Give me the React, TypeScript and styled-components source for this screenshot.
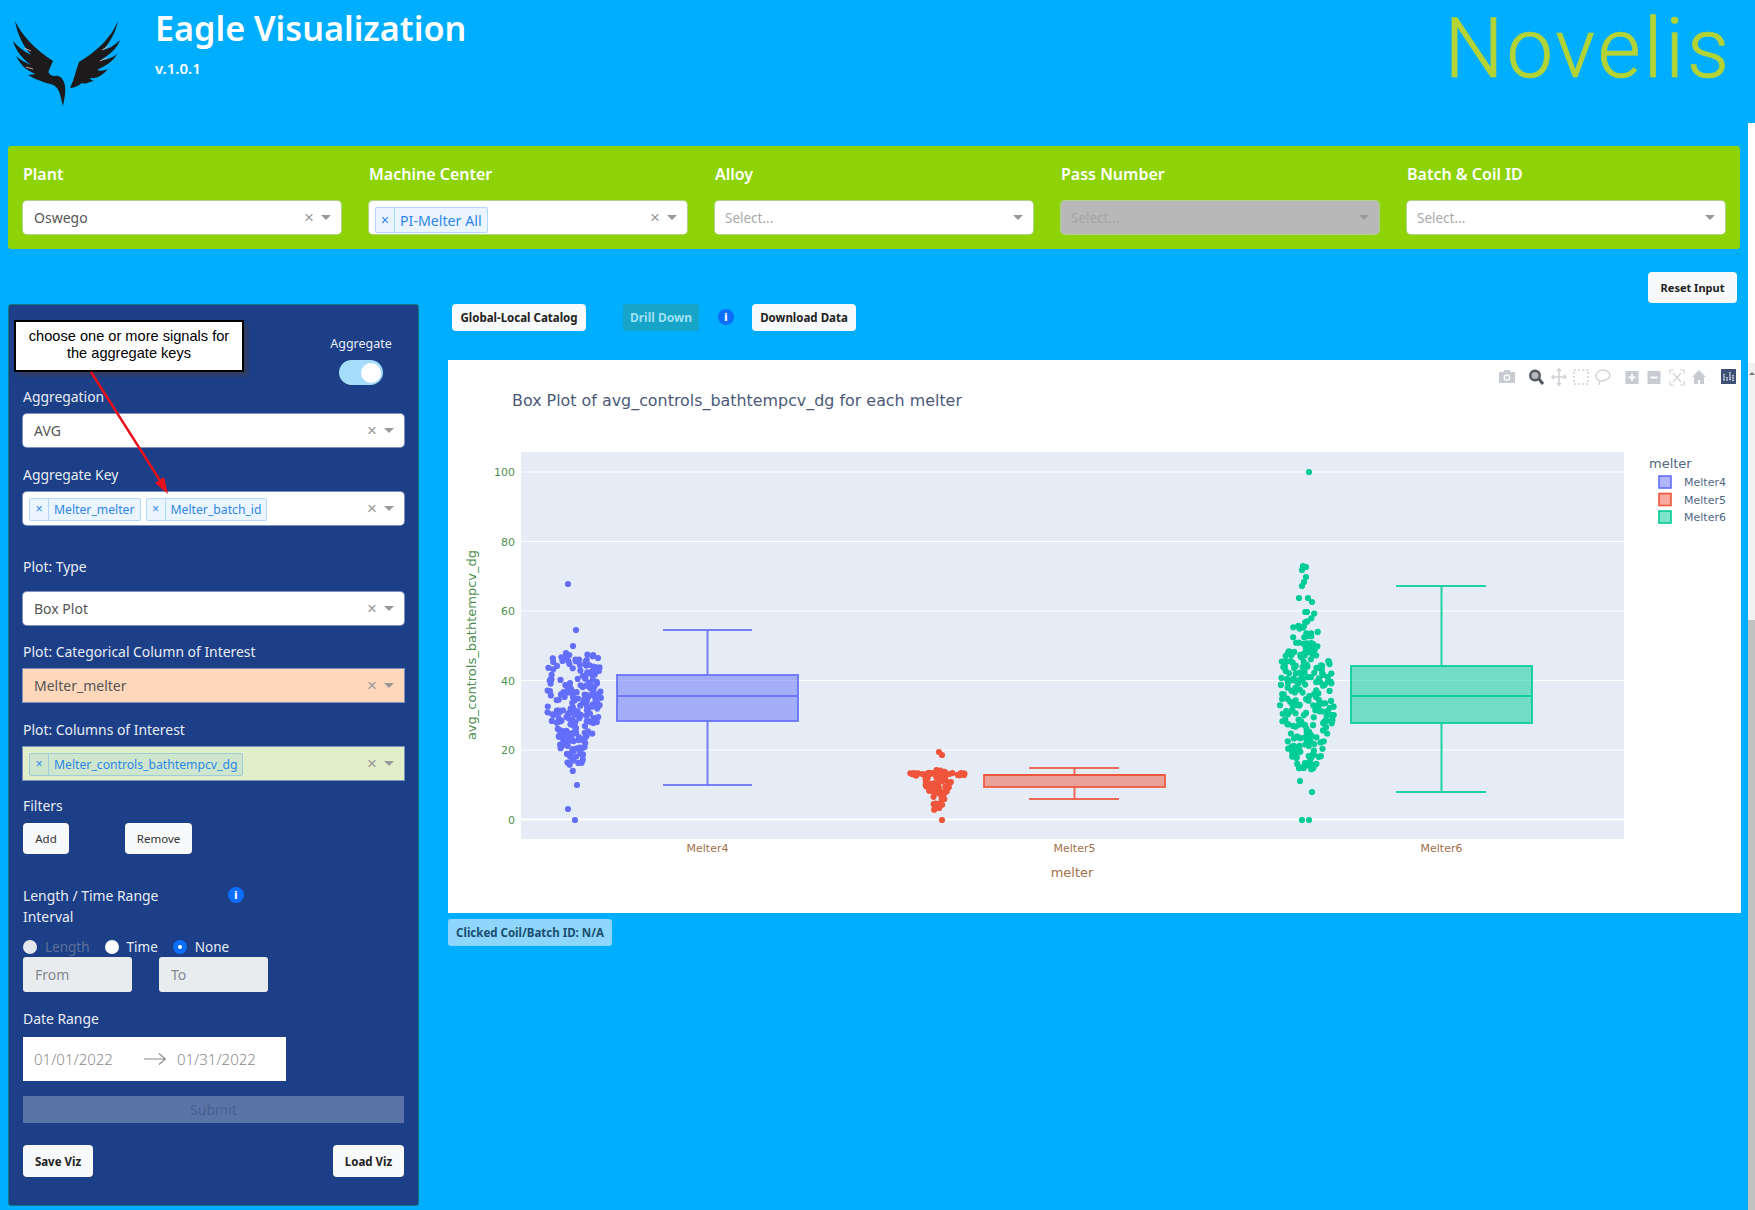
import React from 'react';
import styled, { createGlobalStyle } from 'styled-components';

const UI_FONT = '"Noto Sans", "Open Sans", sans-serif';
const PLOT_FONT = '"DejaVu Sans", sans-serif';

const GlobalStyle = createGlobalStyle`
  html, body {
    margin: 0;
    padding: 0;
    background: #00aeff;
    overflow: hidden;
  }
  * {
    box-sizing: border-box;
  }
`;

function seeded(seed: number) {
  let s = seed;
  return () => {
    s = (s * 16807) % 2147483647;
    return (s - 1) / 2147483646;
  };
}

type Pt = [number, number];

// jittered swarm, width follows a profile of [y, halfWidth] stops
function swarm(seed: number, cx: number, n: number, profile: Pt[]): Pt[] {
  const rnd = seeded(seed);
  const out: Pt[] = [];
  const top = profile[0][0];
  const bottom = profile[profile.length - 1][0];
  const widthAt = (y: number) => {
    for (let i = 1; i < profile.length; i++) {
      if (y <= profile[i][0]) {
        const [y0, w0] = profile[i - 1];
        const [y1, w1] = profile[i];
        return w0 + ((y - y0) / (y1 - y0)) * (w1 - w0);
      }
    }
    return 0;
  };
  let guard = 0;
  while (out.length < n && guard < 20000) {
    guard++;
    const y = top + rnd() * (bottom - top);
    const w = widthAt(y);
    if (rnd() * 30 > w) continue;
    out.push([cx + (rnd() * 2 - 1) * w, y]);
  }
  return out;
}

const melter4Points: Pt[] = [
  ...swarm(11, 574, 215, [
    [653, 8],
    [656, 25],
    [672, 27],
    [700, 27],
    [712, 27],
    [730, 20],
    [750, 13],
    [770, 8],
    [775, 5],
  ]),
  [568, 584],
  [576, 630],
  [573, 646],
  [577, 785],
  [568, 809],
  [575, 820],
  [598, 658],
];

const melter5Points: Pt[] = [
  ...swarm(23, 938, 60, [
    [770, 6],
    [775, 14],
    [790, 12],
    [800, 7],
  ]),
  ...swarm(29, 938, 30, [
    [773, 28],
    [776, 28],
  ]),
  ...swarm(37, 937, 8, [
    [803, 6],
    [810, 4],
  ]),
  [939, 752],
  [942, 755],
  [942, 820],
];

const melter6Points: Pt[] = [
  ...swarm(41, 1306, 215, [
    [640, 10],
    [660, 24],
    [680, 27],
    [715, 28],
    [740, 22],
    [760, 14],
    [770, 8],
  ]),
  ...swarm(47, 1305, 18, [
    [612, 10],
    [640, 14],
  ]),
  [1303, 566],
  [1306, 567],
  [1302, 570],
  [1306, 577],
  [1304, 582],
  [1302, 586],
  [1299, 598],
  [1308, 598],
  [1312, 602],
  [1307, 612],
  [1300, 781],
  [1312, 792],
  [1302, 820],
  [1309, 820],
  [1309, 472],
];

const plotTraces = [
  {
    name: 'Melter4',
    color: '#636efa',
    fill: 'rgba(99,110,250,0.5)',
    points: melter4Points,
    box: { x0: 617, x1: 798, capL: 663, capR: 752, hi: 630, q3: 675, med: 696, q1: 721, lo: 785 },
  },
  {
    name: 'Melter5',
    color: '#ef553b',
    fill: 'rgba(239,85,59,0.5)',
    points: melter5Points,
    box: { x0: 984, x1: 1165, capL: 1029, capR: 1119, hi: 768, q3: 775, med: 775, q1: 787, lo: 799 },
  },
  {
    name: 'Melter6',
    color: '#00cc96',
    fill: 'rgba(0,204,150,0.5)',
    points: melter6Points,
    box: { x0: 1351, x1: 1532, capL: 1396, capR: 1486, hi: 586, q3: 666, med: 696, q1: 723, lo: 792 },
  },
];

const yTicks = [0, 20, 40, 60, 80, 100];
const tickY = (v: number) => 819.5 - 3.475 * v;

// plot svg coordinates are page coordinates shifted by the plot card origin
const OX = 448;
const OY = 360;

function EagleLogo() {
  return (
    <LogoSvg viewBox="0 0 140 115">
      <g fill="#1d1a1c">
        <path d="M15 21 C22 36 36 50 53 61 L49 70 C47 74 52 76 55 76 C60 75 64 79 65 86 C66 94 64 100 63 106 C61 100 61 92 56 87 C52 83 47 84 41 81 C37 80 33 78 28 75 L36 74 C30 72 22 68 16 56 C20 60 26 63 31 65 C24 60 16 52 13 41 C19 48 25 52 31 55 C24 47 17 34 15 21 Z" />
        <path d="M118 21 C111 38 96 52 79 62 C76 70 74 80 70 88 C75 88 79 85 82 83 C86 85 90 81 94 81 C91 80 90 79 90 78 C97 79 103 75 108 69 C103 71 100 71 97 70 C105 66 113 62 117 54 C112 58 106 60 101 60 C109 55 117 49 120 40 C114 46 108 49 103 50 C110 42 116 32 118 21 Z" />
      </g>
      <path
        d="M24 48 L31 51 M26 67 L33 69 M109 46 L102 50 M107 58 L100 61"
        stroke="#b9a9a6"
        strokeWidth="1"
      />
    </LogoSvg>
  );
}

function ClearCaret() {
  return (
    <Indicators>
      <ClearMark>×</ClearMark>
      <Caret />
    </Indicators>
  );
}

function Chip({ label, $big }: { label: string; $big?: boolean }) {
  return (
    <ChipBox $big={$big}>
      <ChipClose>×</ChipClose>
      <ChipLabel>{label}</ChipLabel>
    </ChipBox>
  );
}

function ModeBar() {
  return (
    <ModeSvg width="240" height="20" viewBox="0 0 240 20">
      {/* camera */}
      <path fill="#c8ccd2" d="M1 5 h4 l1.5-2 h5 l1.5 2 h4 v11 h-16 z" />
      <circle cx="9" cy="10.5" r="3.3" fill="#fff" />
      <circle cx="9" cy="10.5" r="2" fill="#c8ccd2" />
      {/* zoom, active */}
      <circle cx="37" cy="8.5" r="4.8" fill="#b5b8bc" stroke="#55595f" strokeWidth="2.4" />
      <path d="M41 12 L45 17" stroke="#55595f" strokeWidth="3" />
      {/* pan */}
      <path
        d="M61 2 v16 M54 10 h14 M59 4 l2-2 2 2 M59 16 l2 2 2-2 M56 8 l-2 2 2 2 M66 8 l2 2-2 2"
        fill="none"
        stroke="#d0d3d8"
        strokeWidth="1.6"
      />
      {/* box select */}
      <rect x="76" y="3" width="14" height="14" fill="none" stroke="#d0d3d8" strokeWidth="1.6" strokeDasharray="2 2" />
      {/* lasso */}
      <path d="M98 9 c0-4 4-6 7-6 s7 2 7 5 -4 6-9 6 c-1 0-2 2-2 4 M98 9 c0 2 2 4 4 5" fill="none" stroke="#d0d3d8" strokeWidth="1.5" />
      {/* zoom in, zoom out */}
      <rect x="127.5" y="4" width="13" height="13" fill="#c8ccd2" />
      <path d="M134 7 v7 M130.5 10.5 h7" stroke="#fff" strokeWidth="2" />
      <rect x="149.5" y="4" width="13" height="13" fill="#c8ccd2" />
      <path d="M152.5 10.5 h7" stroke="#fff" strokeWidth="2" />
      {/* autoscale */}
      <path
        d="M172 7 v-4 h4 M182 3 h4 v4 M186 14 v4 h-4 M176 18 h-4 v-4 M175 6 l8 9 M183 6 l-8 9"
        fill="none"
        stroke="#d0d3d8"
        strokeWidth="1.2"
      />
      {/* home */}
      <path fill="#c8ccd2" d="M201 3 l7 7 h-2 v7 h-4 v-4 h-2 v4 h-4 v-7 h-2 z" />
      {/* plotly logo */}
      <rect x="223" y="2" width="15" height="15" fill="#3f4f75" />
      <path d="M226 7 v7 M229 10 v4 M232 5 v9 M235 8 v6" stroke="#fff" strokeWidth="1.3" strokeDasharray="1.5 0.7" />
    </ModeSvg>
  );
}

function BoxPlot() {
  return (
    <PlotSvg viewBox={`${OX} ${OY} 1293 553`} width="1293" height="553">
      <rect x="521" y="452" width="1103" height="387" fill="#e5ecf6" />
      {yTicks.map((v) => (
        <g key={v}>
          <line
            x1="521"
            x2="1624"
            y1={tickY(v)}
            y2={tickY(v)}
            stroke="#fff"
            strokeWidth={v === 0 ? 2 : 1.2}
          />
          <TickText x="515" y={tickY(v) + 4} textAnchor="end" fill="#4f8f4f">
            {v}
          </TickText>
        </g>
      ))}
      {plotTraces.map((t) => (
        <g key={t.name}>
          {t.points.map(([x, y], i) => (
            <circle key={i} cx={x} cy={y} r="3.1" fill={t.color} />
          ))}
          <line x1={(t.box.x0 + t.box.x1) / 2} x2={(t.box.x0 + t.box.x1) / 2} y1={t.box.hi} y2={t.box.q3} stroke={t.color} strokeWidth="2" opacity="0.85" />
          <line x1={(t.box.x0 + t.box.x1) / 2} x2={(t.box.x0 + t.box.x1) / 2} y1={t.box.q1} y2={t.box.lo} stroke={t.color} strokeWidth="2" opacity="0.85" />
          <line x1={t.box.capL} x2={t.box.capR} y1={t.box.hi} y2={t.box.hi} stroke={t.color} strokeWidth="2" opacity="0.85" />
          <line x1={t.box.capL} x2={t.box.capR} y1={t.box.lo} y2={t.box.lo} stroke={t.color} strokeWidth="2" opacity="0.85" />
          <rect
            x={t.box.x0}
            y={t.box.q3}
            width={t.box.x1 - t.box.x0}
            height={t.box.q1 - t.box.q3}
            fill={t.fill}
            stroke={t.color}
            strokeWidth="2"
            strokeOpacity="0.85"
          />
          <line x1={t.box.x0} x2={t.box.x1} y1={t.box.med} y2={t.box.med} stroke={t.color} strokeWidth="2" opacity="0.85" />
          <TickText x={(t.box.x0 + t.box.x1) / 2} y="852" textAnchor="middle" fill="#a0704a">
            {t.name}
          </TickText>
        </g>
      ))}
      <AxisText x="1072" y="877" textAnchor="middle" fill="#a0704a">
        melter
      </AxisText>
      <AxisText
        x="476"
        y="645"
        textAnchor="middle"
        fill="#4f8f4f"
        transform="rotate(-90 476 645)"
      >
        avg_controls_bathtempcv_dg
      </AxisText>
      <TitleText x="512" y="406" fill="#4c5a78">
        Box Plot of avg_controls_bathtempcv_dg for each melter
      </TitleText>
      <AxisText x="1649" y="468" fill="#506784">
        melter
      </AxisText>
      {plotTraces.map((t, i) => (
        <g key={t.name}>
          <rect x="1659" y={476 + i * 17.5} width="12" height="12" fill={t.fill} stroke={t.color} strokeWidth="1.6" />
          <TickText x="1684" y={486 + i * 17.5} fill="#506784">
            {t.name}
          </TickText>
        </g>
      ))}
    </PlotSvg>
  );
}

export default function App() {
  return (
    <Page>
      <GlobalStyle />
      <Header>
        <Brand>
          <EagleLogo />
          <BrandText>
            <AppTitle>Eagle Visualization</AppTitle>
            <Version>v.1.0.1</Version>
          </BrandText>
        </Brand>
        <Novelis>Novelis</Novelis>
      </Header>

      <FilterBar>
        <FilterCol>
          <FilterLabel>Plant</FilterLabel>
          <Select>
            <SelectValue>Oswego</SelectValue>
            <ClearCaret />
          </Select>
        </FilterCol>
        <FilterCol>
          <FilterLabel>Machine Center</FilterLabel>
          <Select>
            <Chips $big>
              <Chip label="PI-Melter All" $big />
            </Chips>
            <ClearCaret />
          </Select>
        </FilterCol>
        <FilterCol>
          <FilterLabel>Alloy</FilterLabel>
          <Select>
            <Placeholder>Select...</Placeholder>
            <Indicators>
              <Caret />
            </Indicators>
          </Select>
        </FilterCol>
        <FilterCol>
          <FilterLabel>Pass Number</FilterLabel>
          <Select $tone="#b8b8b8">
            <Placeholder $dim>Select...</Placeholder>
            <Indicators>
              <Caret />
            </Indicators>
          </Select>
        </FilterCol>
        <FilterCol>
          <FilterLabel>Batch &amp; Coil ID</FilterLabel>
          <Select>
            <Placeholder>Select...</Placeholder>
            <Indicators>
              <Caret />
            </Indicators>
          </Select>
        </FilterCol>
      </FilterBar>

      <Main>
        <SidePanel>
          <Callout>
            choose one or more signals for
            <br />
            the aggregate keys
          </Callout>
          <CalloutArrow width="120" height="150" viewBox="0 0 120 150">
            <line x1="6" y1="2" x2="76" y2="112" stroke="#e8101c" strokeWidth="2.4" />
            <path d="M83 124 L70 113 L79 107 Z" fill="#e8101c" />
          </CalloutArrow>

          <AggregateRow>
            <AggregateBox>
              <SmallLabel>Aggregate</SmallLabel>
              <Toggle>
                <ToggleKnob />
              </Toggle>
            </AggregateBox>
          </AggregateRow>

          <FieldLabel>Aggregation</FieldLabel>
          <Select>
            <SelectValue>AVG</SelectValue>
            <ClearCaret />
          </Select>

          <FieldLabel $top={18}>Aggregate Key</FieldLabel>
          <Select>
            <Chips>
              <Chip label="Melter_melter" />
              <Chip label="Melter_batch_id" />
            </Chips>
            <ClearCaret />
          </Select>

          <FieldLabel $top={32} $h={35}>
            Plot: Type
          </FieldLabel>
          <Select>
            <SelectValue>Box Plot</SelectValue>
            <ClearCaret />
          </Select>

          <FieldLabel $top={17}>Plot: Categorical Column of Interest</FieldLabel>
          <Select $tone="#ffd7bb" $square>
            <SelectValue>Melter_melter</SelectValue>
            <ClearCaret />
          </Select>

          <FieldLabel $top={18}>Plot: Columns of Interest</FieldLabel>
          <Select $tone="#e0efc9" $square>
            <Chips>
              <Chip label="Melter_controls_bathtempcv_dg" />
            </Chips>
            <ClearCaret />
          </Select>

          <FieldLabel $top={16}>Filters</FieldLabel>
          <FilterButtons>
            <SmallButton $w={46}>Add</SmallButton>
            <SmallButton $w={67}>Remove</SmallButton>
          </FilterButtons>

          <RangeHead>
            <RangeLabel>Length / Time Range</RangeLabel>
            <InfoCircle>i</InfoCircle>
          </RangeHead>
          <IntervalLabel>Interval</IntervalLabel>
          <RadioRow>
            <RadioItem $disabled>
              <Radio $state="off" />
              Length
            </RadioItem>
            <RadioItem>
              <Radio $state="empty" />
              Time
            </RadioItem>
            <RadioItem>
              <Radio $state="on" />
              None
            </RadioItem>
          </RadioRow>
          <RangeInputs>
            <RangeInput>From</RangeInput>
            <RangeInput>To</RangeInput>
          </RangeInputs>

          <FieldLabel $top={17} $h={28}>
            Date Range
          </FieldLabel>
          <DateBox>
            <DateText>01/01/2022</DateText>
            <DateArrow width="22" height="14" viewBox="0 0 22 14">
              <path d="M0 7 H21 M15 1.5 L21.5 7 L15 12.5" fill="none" stroke="#8a8a8a" strokeWidth="1.2" />
            </DateArrow>
            <DateText>01/31/2022</DateText>
          </DateBox>

          <SubmitBar>Submit</SubmitBar>

          <SaveRow>
            <BoldButton $w={70}>Save Viz</BoldButton>
            <BoldButton $w={71}>Load Viz</BoldButton>
          </SaveRow>
        </SidePanel>

        <Content>
          <ResetRow>
            <BoldButton $h={31} $w={89} $size={11}>
              Reset Input
            </BoldButton>
          </ResetRow>
          <ActionRow>
            <BoldButton $h={27} $w={134}>
              Global-Local Catalog
            </BoldButton>
            <DrillButton>Drill Down</DrillButton>
            <ActionInfo>i</ActionInfo>
            <BoldButton $h={27} $w={104}>
              Download Data
            </BoldButton>
          </ActionRow>
          <PlotCard>
            <ModeBar />
            <BoxPlot />
          </PlotCard>
          <ClickedBadge>Clicked Coil/Batch ID: N/A</ClickedBadge>
        </Content>
      </Main>
      <ScrollTrack>
        <ScrollBlank />
        <ScrollRail>
          <ScrollUp />
        </ScrollRail>
        <ScrollThumb />
      </ScrollTrack>
    </Page>
  );
}

const Page = styled.div`
  position: relative;
  width: 1755px;
  height: 1210px;
  overflow: hidden;
  background: #00aeff;
  font-family: ${UI_FONT};
`;

const Header = styled.header`
  display: flex;
  justify-content: space-between;
  height: 146px;
  padding-right: 23px;
`;

const Brand = styled.div`
  display: flex;
`;

const LogoSvg = styled.svg`
  width: 140px;
  height: 115px;
`;

const BrandText = styled.div`
  padding: 4px 0 0 15px;
`;

const AppTitle = styled.h1`
  margin: 0;
  font-size: 34.2px;
  line-height: 48px;
  font-weight: 600;
  color: #fff;
`;

const Version = styled.div`
  margin-top: 6px;
  font-size: 15px;
  line-height: 20px;
  font-weight: 600;
  color: #fff;
`;

const Novelis = styled.div`
  font-family: Roboto, sans-serif;
  font-size: 83px;
  line-height: 97px;
  font-weight: 300;
  letter-spacing: 3px;
  -webkit-text-stroke: 0.7px #b4d334;
  color: #b4d334;
`;

const FilterBar = styled.section`
  display: grid;
  grid-template-columns: repeat(5, 318px);
  column-gap: 28px;
  width: 1732px;
  height: 103px;
  margin-left: 8px;
  padding: 17px 15px 0;
  background: #8dd307;
  border-radius: 3px;
`;

const FilterCol = styled.div`
  display: flex;
  flex-direction: column;
`;

const FilterLabel = styled.label`
  height: 38px;
  font-size: 16px;
  line-height: 22px;
  font-weight: 600;
  color: #fff;
`;

const Select = styled.div<{ $tone?: string; $square?: boolean }>`
  display: flex;
  align-items: center;
  justify-content: space-between;
  height: 33px;
  padding-left: 6px;
  background: ${({ $tone }) => $tone || '#fff'};
  border-radius: ${({ $square }) => ($square ? '0' : '4px')};
  box-shadow: 0 0 0 1px rgba(204, 214, 235, 0.55);
  flex-shrink: 0;
`;

const SelectValue = styled.span`
  padding-left: 5px;
  font-size: 14px;
  color: #555;
`;

const Placeholder = styled.span<{ $dim?: boolean }>`
  padding-left: 4px;
  font-size: 13.5px;
  color: ${({ $dim }) => ($dim ? '#a4a4a4' : '#aaa')};
`;

const Indicators = styled.div`
  display: flex;
  align-items: center;
  gap: 7px;
  padding-right: 10px;
`;

const ClearMark = styled.span`
  font-family: "Liberation Sans", sans-serif;
  font-size: 17px;
  line-height: 17px;
  color: #999;
`;

const Caret = styled.span`
  width: 0;
  height: 0;
  border-left: 5px solid transparent;
  border-right: 5px solid transparent;
  border-top: 5px solid #999;
`;

const Chips = styled.div<{ $big?: boolean }>`
  display: flex;
  gap: 5px;
  align-self: flex-end;
  margin-bottom: ${({ $big }) => ($big ? '1px' : '4px')};
`;

const ChipBox = styled.div<{ $big?: boolean }>`
  display: flex;
  height: ${({ $big }) => ($big ? '26px' : '23px')};
  background: rgba(0, 126, 255, 0.08);
  border: 1px solid rgba(0, 126, 255, 0.24);
  border-radius: 2px;
  color: #2f86e6;
  font-size: ${({ $big }) => ($big ? '14.2px' : '12.2px')};
  line-height: ${({ $big }) => ($big ? '25px' : '21px')};
`;

const ChipClose = styled.span`
  width: 19px;
  text-align: center;
  border-right: 1px solid rgba(0, 126, 255, 0.24);
  font-family: "Liberation Sans", sans-serif;
`;

const ChipLabel = styled.span`
  padding: 0 5px;
`;

const Main = styled.main`
  display: flex;
  align-items: flex-start;
  margin-top: 23px;
  padding-left: 8px;
`;

const SidePanel = styled.aside`
  position: relative;
  display: flex;
  flex-direction: column;
  width: 411px;
  height: 902px;
  margin-top: 32px;
  padding: 0 14px;
  background: #1c3f87;
  border: 1px solid #12777f;
  border-radius: 3px;
`;

const Callout = styled.div`
  position: absolute;
  left: 5px;
  top: 15px;
  width: 230px;
  height: 52px;
  padding-top: 6px;
  background: #fff;
  border: 2px solid #000;
  box-shadow: 4px 4px 3px rgba(60, 60, 80, 0.6);
  font-family: "Liberation Sans", sans-serif;
  font-size: 14.6px;
  line-height: 17px;
  text-align: center;
  color: #000;
  z-index: 2;
`;

const CalloutArrow = styled.svg`
  position: absolute;
  left: 76px;
  top: 65px;
  z-index: 3;
`;

const AggregateRow = styled.div`
  display: flex;
  justify-content: flex-end;
  height: 82px;
  padding-top: 28px;
`;

const AggregateBox = styled.div`
  display: flex;
  flex-direction: column;
  align-items: center;
  width: 76px;
  margin-right: 5px;
`;

const SmallLabel = styled.span`
  font-size: 12.5px;
  line-height: 22px;
  color: #e8edf5;
`;

const Toggle = styled.div`
  display: flex;
  justify-content: flex-end;
  align-items: center;
  width: 44px;
  height: 25px;
  margin-top: 5px;
  padding-right: 2px;
  background: #a5ddfa;
  border-radius: 13px;
`;

const ToggleKnob = styled.span`
  width: 20px;
  height: 20px;
  background: #fff;
  border-radius: 50%;
`;

const FieldLabel = styled.label<{ $top?: number; $h?: number }>`
  display: block;
  margin-top: ${({ $top }) => $top || 0}px;
  height: ${({ $h }) => $h || 27}px;
  font-size: 13.9px;
  line-height: 20px;
  color: #e8edf5;
`;

const FilterButtons = styled.div`
  display: flex;
  gap: 56px;
`;

const SmallButton = styled.button<{ $w: number }>`
  width: ${({ $w }) => $w}px;
  height: 31px;
  padding: 0;
  background: #f8f9fa;
  border: none;
  border-radius: 4px;
  font-family: ${UI_FONT};
  font-size: 11.5px;
  color: #333;
`;

const RangeHead = styled.div`
  display: flex;
  align-items: center;
  gap: 35px;
  margin-top: 30px;
  height: 22px;
`;

const RangeLabel = styled.span`
  width: 170px;
  font-size: 13.9px;
  color: #e8edf5;
`;

const InfoCircle = styled.span`
  display: inline-flex;
  align-items: center;
  justify-content: center;
  width: 16px;
  height: 16px;
  flex-shrink: 0;
  background: #0d6efd;
  border-radius: 50%;
  font-family: "DejaVu Sans", sans-serif;
  font-size: 11px;
  font-weight: 700;
  color: #fff;
`;

const ActionInfo = styled(InfoCircle)`
  margin-right: 18px;
`;

const IntervalLabel = styled.div`
  height: 22px;
  font-size: 13.9px;
  line-height: 22px;
  color: #e8edf5;
`;

const RadioRow = styled.div`
  display: flex;
  gap: 15px;
  margin-top: 9px;
  height: 20px;
`;

const RadioItem = styled.span<{ $disabled?: boolean }>`
  display: flex;
  align-items: center;
  gap: 8px;
  font-size: 13.5px;
  color: ${({ $disabled }) => ($disabled ? '#5c7099' : '#e8edf5')};
`;

const Radio = styled.span<{ $state: 'off' | 'empty' | 'on' }>`
  width: 14px;
  height: 14px;
  border-radius: 50%;
  background: ${({ $state }) => ($state === 'off' ? '#e3e6ea' : '#fff')};
  border: ${({ $state }) => ($state === 'on' ? '5px solid #0d6efd' : 'none')};
`;

const RangeInputs = styled.div`
  display: flex;
  gap: 27px;
`;

const RangeInput = styled.div`
  width: 109px;
  height: 35px;
  padding-left: 12px;
  background: #e9ecef;
  border-radius: 3px;
  font-size: 14px;
  line-height: 35px;
  color: #808890;
`;

const DateBox = styled.div`
  display: flex;
  align-items: center;
  width: 263px;
  height: 44px;
  padding-left: 11px;
  background: #fff;
`;

const DateText = styled.span`
  font-size: 15px;
  font-weight: 300;
  color: #8a8a8a;
`;

const DateArrow = styled.svg`
  flex-shrink: 0;
  margin: 0 11px 0 31px;
`;

const SubmitBar = styled.div`
  height: 27px;
  margin-top: 15px;
  background: #5b74a8;
  text-align: center;
  font-size: 14px;
  line-height: 27px;
  color: #47608f;
`;

const SaveRow = styled.div`
  display: flex;
  justify-content: space-between;
  margin-top: 22px;
`;

const BoldButton = styled.button<{ $h?: number; $w?: number; $size?: number }>`
  width: ${({ $w }) => ($w ? `${$w}px` : 'auto')};
  height: ${({ $h }) => $h || 32}px;
  padding: 0;
  background: #f8f9fa;
  border: none;
  border-radius: 4px;
  font-family: ${UI_FONT};
  font-size: ${({ $size }) => $size || 11.5}px;
  font-weight: 700;
  white-space: nowrap;
  color: #222;
`;

const Content = styled.div`
  display: flex;
  flex-direction: column;
  width: 1293px;
  margin-left: 29px;
`;

const ResetRow = styled.div`
  display: flex;
  justify-content: flex-end;
  height: 31px;
  margin-right: 4px;
`;

const ActionRow = styled.div`
  display: flex;
  align-items: center;
  height: 57px;
  padding: 0 0 29px 4px;
`;

const DrillButton = styled.button`
  width: 76px;
  height: 27px;
  margin: 0 19px 0 37px;
  background: #16a4c9;
  border: none;
  border-radius: 3px;
  font-family: ${UI_FONT};
  font-size: 12px;
  font-weight: 700;
  color: #9fe0f4;
`;

const PlotCard = styled.div`
  position: relative;
  width: 1293px;
  height: 553px;
  background: #fff;
`;

const ModeSvg = styled.svg`
  position: absolute;
  left: 1050px;
  top: 7px;
`;

const PlotSvg = styled.svg`
  display: block;
`;

const TickText = styled.text`
  font-family: ${PLOT_FONT};
  font-size: 11px;
`;

const AxisText = styled.text`
  font-family: ${PLOT_FONT};
  font-size: 13px;
`;

const TitleText = styled.text`
  font-family: ${PLOT_FONT};
  font-size: 15.9px;
`;

const ClickedBadge = styled.div`
  align-self: flex-start;
  width: 164px;
  height: 27px;
  margin-top: 6px;
  background: #8ed6fb;
  border-radius: 3px;
  font-size: 11.5px;
  font-weight: 700;
  line-height: 27px;
  text-align: center;
  color: #1a4f70;
`;

const ScrollTrack = styled.div`
  position: absolute;
  top: 123px;
  right: 0;
  display: flex;
  flex-direction: column;
  width: 7px;
  height: 1087px;
`;

const ScrollBlank = styled.div`
  flex: 0 0 240px;
  background: #fff;
`;

const ScrollRail = styled.div`
  flex: 0 0 257px;
  padding: 9px 0 0 1px;
  background: #f1f1f1;
`;

const ScrollUp = styled.div`
  width: 0;
  height: 0;
  border-left: 3px solid transparent;
  border-right: 3px solid transparent;
  border-bottom: 3px solid #777;
`;

const ScrollThumb = styled.div`
  flex: 1;
  background: #c1c1c1;
`;
